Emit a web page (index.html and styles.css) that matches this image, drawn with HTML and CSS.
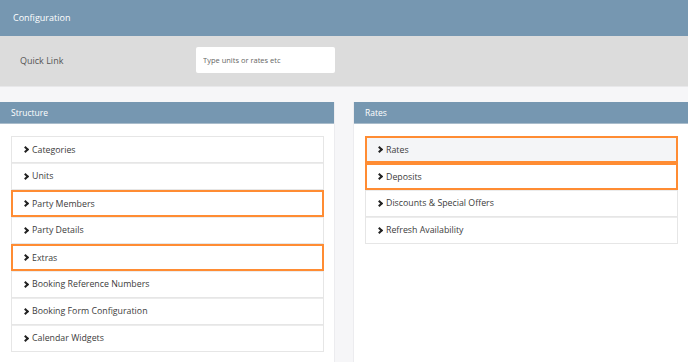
FILE: index.html
```html
<!DOCTYPE html>
<html lang="en">
<head>
    <meta charset="UTF-8">
    <meta name="viewport" content="width=device-width, initial-scale=1.0">
    <title>Configuration</title>
    <link rel="stylesheet" href="styles.css">
</head>
<body>
    <div class="page-header">Configuration</div>

    <div class="quick-link">
        <label for="quick">Quick Link</label>
        <input type="text" id="quick" placeholder="Type units or rates etc">
    </div>

    <div class="columns">
        <div class="panel">
            <div class="panel-title">Structure</div>
            <ul class="menu">
                <li><span class="chev"></span>Categories</li>
                <li><span class="chev"></span>Units</li>
                <li class="marked"><span class="chev"></span>Party Members</li>
                <li><span class="chev"></span>Party Details</li>
                <li class="marked"><span class="chev"></span>Extras</li>
                <li><span class="chev"></span>Booking Reference Numbers</li>
                <li><span class="chev"></span>Booking Form Configuration</li>
                <li><span class="chev"></span>Calendar Widgets</li>
            </ul>
        </div>
        <div class="gutter"></div>
        <div class="panel">
            <div class="panel-title">Rates</div>
            <ul class="menu">
                <li class="marked hover"><span class="chev"></span>Rates</li>
                <li class="marked"><span class="chev"></span>Deposits</li>
                <li><span class="chev"></span>Discounts &amp; Special Offers</li>
                <li><span class="chev"></span>Refresh Availability</li>
            </ul>
        </div>
    </div>
</body>
</html>
```

FILE: styles.css
```css
body {
    margin: 0;
    font-family: "Open Sans", sans-serif;
    color: #3c3c3c;
    background: #f6f6f8;
    height: 362px;
    overflow: hidden;
}
.page-header {
    height: 36px;
    background-color: #7697b1;
    color: #fff;
    font-size: 9px;
    padding-left: 13px;
    line-height: 35px;
}
.quick-link {
    height: 51px;
    background-color: #dcdcdc;
    display: flex;
    align-items: center;
    border-bottom: 1px solid #e8e8ea;
    box-sizing: border-box;
}
.quick-link label {
    font-size: 9px;
    color: #555;
    padding-left: 20px;
    width: 176px;
    margin-top: -2px;
}
.quick-link input {
    width: 139px;
    height: 26px;
    border: none;
    border-radius: 2px;
    box-sizing: border-box;
    padding: 0 7px;
    font-family: inherit;
    font-size: 7.5px;
    margin-top: -2px;
}
.quick-link input::placeholder {
    color: #666;
}
.columns {
    display: flex;
    margin-top: 15px;
    height: 260px;
}
.panel {
    background: #fff;
    width: 334px;
    flex: none;
}
.panel:last-child {
    flex: 1;
}
.gutter {
    width: 20px;
    border-left: 1px solid #ececef;
    border-right: 1px solid #ececef;
    box-sizing: border-box;
}
.panel-title {
    height: 22px;
    background-color: #7697b1;
    color: #fff;
    font-size: 8.5px;
    line-height: 22px;
    padding-left: 11px;
    border-bottom: 1px solid #a9bccb;
    box-sizing: border-box;
}
.menu {
    list-style: none;
    margin: 12px 10px 0 11px;
    padding: 0;
}
.menu li {
    height: 27px;
    box-sizing: border-box;
    border: 1px solid #e6e6e6;
    border-top-width: 0;
    font-size: 8.8px;
    display: flex;
    align-items: center;
    padding-left: 13px;
}
.menu li:first-child {
    border-top-width: 1px;
}
.menu li + li {
    box-shadow: inset 0 1px 0 #ececec;
}
.menu li.marked {
    border: 2px solid #ff8c33;
    padding-left: 12px;
    box-shadow: none;
}
.menu li.hover {
    background: #f4f5f7;
}
.chev {
    width: 3px;
    height: 3px;
    border-right: 2px solid #222;
    border-top: 2px solid #222;
    transform: rotate(45deg);
    margin-right: 4px;
    margin-left: -2px;
}
```
